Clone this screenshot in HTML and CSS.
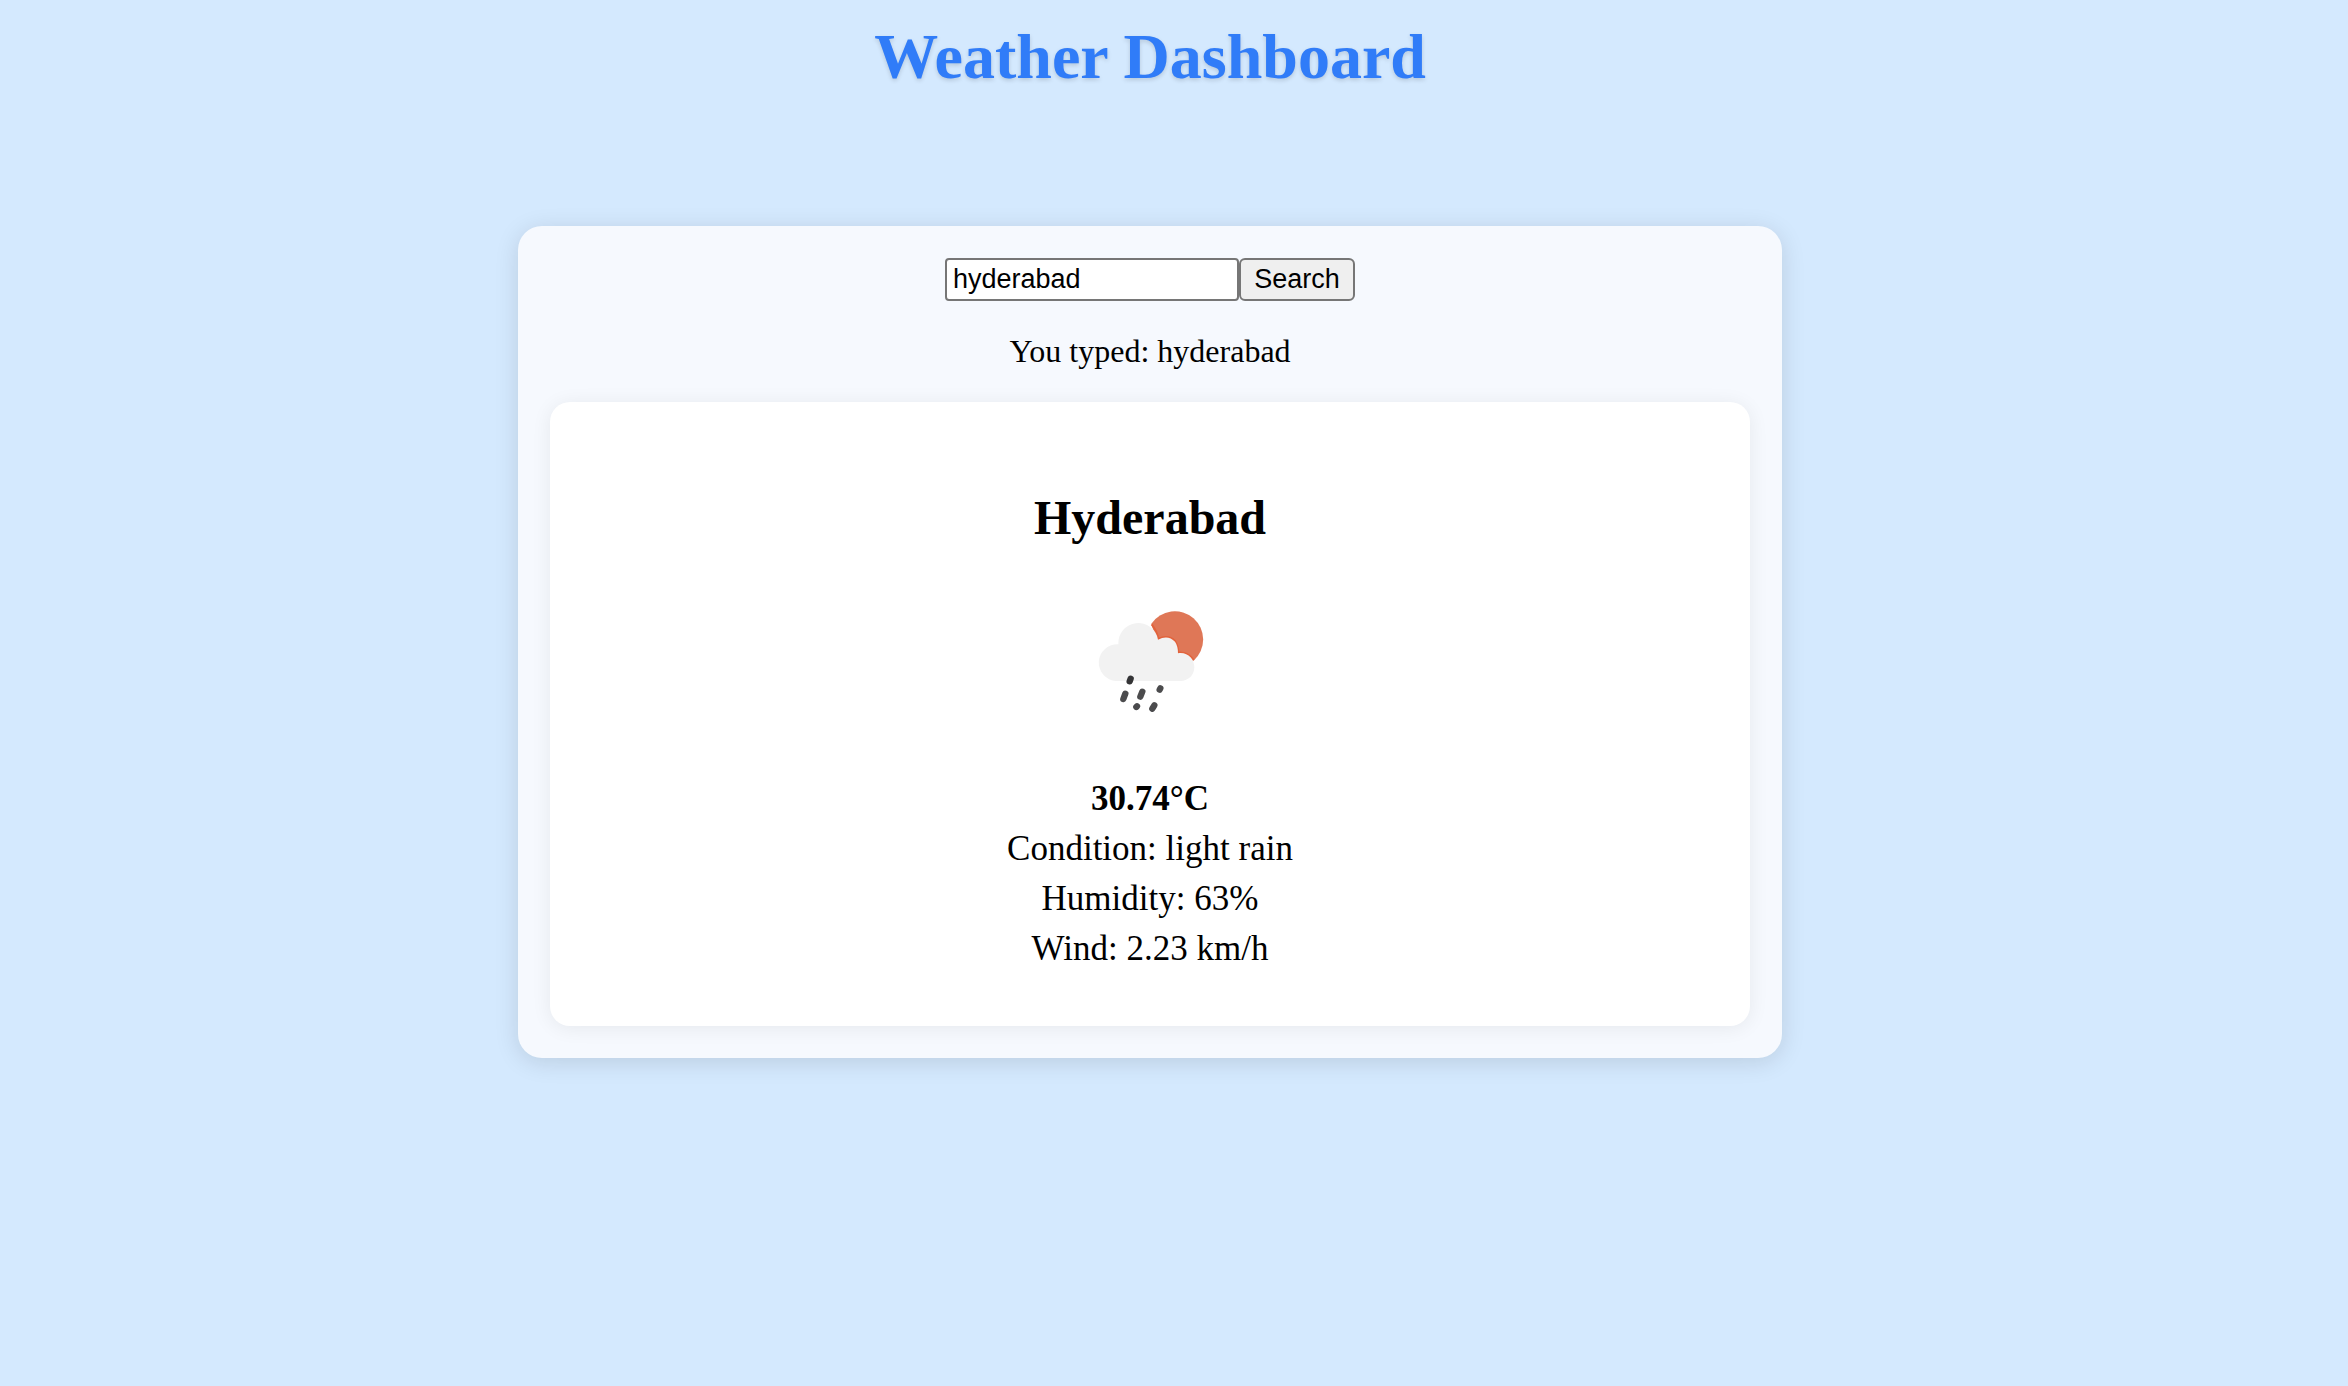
FILE: index.html
```html
<!DOCTYPE html>
<html lang="en">
<head>
<meta charset="utf-8">
<title>Weather Dashboard</title>
<link rel="stylesheet" href="styles.css">
</head>
<body>
<h1 class="title">Weather Dashboard</h1>
<main class="dashboard">
  <form class="search">
    <input class="search-input" type="text" value="hyderabad" aria-label="City">
    <button class="search-button" type="button">Search</button>
  </form>
  <p class="typed">You typed: hyderabad</p>
  <section class="card">
    <h2 class="city">Hyderabad</h2>
    <svg class="icon" viewBox="0 0 420 420" role="img" aria-label="light rain">
      <path d="M214 98A85 85 0 1 1 341 209L290 200L230 150Z" fill="#df7757"/>
      <path d="M215 100Q232 122 235 144Q264 130 285 150Q295 165 295 185Q322 182 341 207" fill="none" stroke="#e2633c" stroke-width="6"/>
      <path fill="#f2f2f2" d="M108 270A55 55 0 1 1 115 160A60 60 0 0 1 234 146Q264 130 285 152Q294 165 294 187C322 182 343 203 343 229C343 252 325 270 302 270Z"/>
      <g stroke="#4b4b4d" stroke-width="19" stroke-linecap="round">
        <path d="M152 263L149 271" stroke="#343436"/>
        <path d="M136 308L130 324M187 302L181 317M241 292L239 296M171 346L169 348M223 343L217 353"/>
      </g>
    </svg>
    <p class="temperature">30.74°C</p>
    <p class="detail">Condition: light rain</p>
    <p class="detail">Humidity: 63%</p>
    <p class="detail">Wind: 2.23 km/h</p>
  </section>
</main>
</body>
</html>
```
FILE: styles.css
```css
* {
  box-sizing: border-box;
}

body {
  margin: 0;
  padding: 20px 48px 48px 0;
  background: #d4e9fe;
  color: #000;
  font-family: "Liberation Serif", "Times New Roman", serif;
  font-size: 32px;
  text-align: center;
}

.title {
  margin: 0 0 132px;
  color: #307cf8;
  font-size: 64px;
  line-height: 74px;
  text-shadow: 0 2px 4px rgba(0, 0, 0, 0.15);
}

.dashboard {
  max-width: 1264px;
  margin: 0 auto;
  padding: 32px;
  border-radius: 24px;
  background: #f6f9fe;
  box-shadow: 0 4px 24px rgba(0, 0, 0, 0.12);
}

.search {
  display: flex;
  justify-content: center;
}

.search-input,
.search-button {
  height: 43px;
  border: 2px solid #767676;
  color: #000;
  font-family: "Liberation Sans", Arial, sans-serif;
  font-size: 27px;
}

.search-input {
  width: 294px;
  padding: 2px 6px;
  border-radius: 4px;
  background: #fff;
}

.search-button {
  width: 116px;
  padding: 2px 12px;
  border-radius: 6px;
  background: #efefef;
}

.typed {
  margin: 32px 0;
  line-height: 37px;
}

.card {
  padding: 88px 32px 52px;
  border-radius: 20px;
  background: #fff;
  box-shadow: 0 2px 20px rgba(0, 0, 0, 0.07);
}

.city {
  margin: 0 0 45px;
  font-size: 48px;
  line-height: 56px;
}

.icon {
  display: block;
  width: 140px;
  height: 140px;
  margin: 0 auto 43px;
}

.temperature,
.detail {
  margin: 0;
  font-size: 35px;
  line-height: 50px;
}

.temperature {
  font-weight: bold;
}
```
